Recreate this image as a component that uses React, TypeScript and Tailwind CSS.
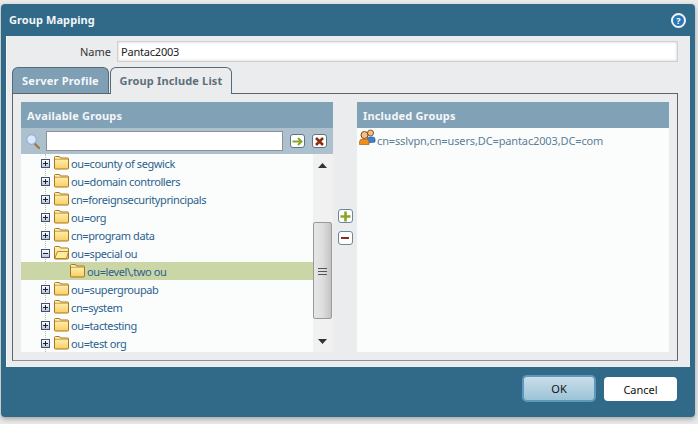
const font = "font-['Noto_Sans',sans-serif]";

const rows = [
  { label: "ou=county of segwick" },
  { label: "ou=domain controllers" },
  { label: "cn=foreignsecurityprincipals" },
  { label: "ou=org" },
  { label: "cn=program data" },
  { label: "ou=special ou", open: true },
  { label: "ou=level\\,two ou", child: true },
  { label: "ou=supergroupab" },
  { label: "cn=system" },
  { label: "ou=tactesting" },
  { label: "ou=test org" },
];

function Folder({ open }: { open?: boolean }) {
  return (
    <svg width="15" height="14" viewBox="0 0 15 14" className="shrink-0">
      <defs>
        <linearGradient id="fold" x1="0" y1="0" x2="0" y2="1">
          <stop offset="0" stopColor="#fff6c4" />
          <stop offset="1" stopColor="#f8cf62" />
        </linearGradient>
      </defs>
      <path d="M0.5 3V1.5Q0.5 0.5 1.5 0.5H5Q6 0.5 6.5 2H13.5Q14.5 2 14.5 3V12Q14.5 13 13.5 13H1.5Q0.5 13 0.5 12Z" fill="url(#fold)" stroke="#a9761a" />
      {open ? <path d="M0.8 12.5L3.5 5.5H14.5L12.5 12.5Z" fill="#fdeb9f" stroke="#a9761a" strokeWidth="0.8" /> : <path d="M1 3.2H14" stroke="#b98a2e" strokeWidth="0.8" />}
    </svg>
  );
}

function Toggle({ open }: { open?: boolean }) {
  return (
    <div className="w-[9px] h-[9px] shrink-0 border border-[#44506a] bg-gradient-to-b from-white to-[#b9c4dc] flex items-center justify-center relative">
      <div className="absolute w-[5px] h-px bg-[#1a2233]" />
      {!open && <div className="absolute w-px h-[5px] bg-[#1a2233]" />}
    </div>
  );
}

function Row({ label, open, child }: { label: string; open?: boolean; child?: boolean }) {
  return (
    <div className={`h-[18px] flex items-center ${child ? "bg-[#cad6a5] pl-[49px]" : "pl-[20px]"}`}>
      {!child && <Toggle open={open} />}
      {!child && <div className="w-[4px]" />}
      <Folder open={open} />
      <span className={`ml-[2px] pt-[2px] text-[11px] tracking-[-0.4px] whitespace-nowrap text-[#2d5f8f] ${font}`}>{label}</span>
    </div>
  );
}

function SmallButton({ children, className = "" }: { children: React.ReactNode; className?: string }) {
  return (
    <div className={`w-[15px] h-[14px] rounded-[3px] border border-[#5c7686] bg-white flex items-center justify-center ${className}`}>
      {children}
    </div>
  );
}

function PanelHeader({ title }: { title: string }) {
  return (
    <div className={`h-[26px] bg-[#81a1b6] flex items-center px-[6px] pt-[2px] text-[11px] font-bold tracking-[0.17px] text-[#f4f7f9] ${font}`}>
      {title}
    </div>
  );
}

function Scrollbar() {
  return (
    <div className="w-[20px] shrink-0 bg-[#f1f1f1] flex flex-col items-start">
      <div className="h-[68px] w-[19px] flex flex-col items-center pt-[9px]">
        <svg width="9" height="5" viewBox="0 0 9 5"><path d="M4.5 0L9 5H0Z" fill="#333" /></svg>
      </div>
      <div className="w-[19px] h-[97px] rounded-[2px] border border-[#9a9a9a] bg-gradient-to-r from-[#e6e6e6] via-[#dedede] to-[#c4c4c4] flex flex-col items-center justify-center gap-[2px] pt-[2px]">
        <div className="w-[9px] h-px bg-[#555]" />
        <div className="w-[9px] h-px bg-[#555]" />
        <div className="w-[9px] h-px bg-[#555]" />
      </div>
      <div className="flex-1 w-[19px] flex flex-col items-center pt-[20px]">
        <svg width="9" height="5" viewBox="0 0 9 5"><path d="M0 0H9L4.5 5Z" fill="#333" /></svg>
      </div>
    </div>
  );
}

export default function App() {
  return (
    <div className="w-[698px] h-[424px] bg-[#e9e9e9] pt-[4px] pl-px overflow-hidden">
      <div className={`w-[694px] h-[413px] bg-[#316a89] rounded-[4px] flex flex-col shadow-[0_2px_5px_rgba(0,0,0,0.3)] ${font}`}>
        <div className="h-[32px] shrink-0 flex items-center justify-between pl-[8px] pr-[9px]">
          <span className="pt-[1px] text-[11px] font-bold tracking-[0.08px] text-[#f2f6f8]">Group Mapping</span>
          <div className="w-[15px] h-[15px] rounded-full border-2 border-[#eef5fa] bg-[#2a77b5] flex items-center justify-center text-[9px] leading-none font-bold text-white">?</div>
        </div>

        <div className="mx-[5px] h-[331px] shrink-0 bg-[#ebecee] pl-[5px] pr-[12px] border-l border-[#f7f7f7] flex flex-col">
          <div className="h-[31px] shrink-0 flex items-center">
            <span className="w-[104px] pr-[5px] pt-[2px] text-right text-[11px] text-[#333]">Name</span>
            <div className="ml-[1px] w-[561px] h-[21px] bg-white border border-[#cfd1cf] shadow-[inset_0_0_3px_rgba(0,0,0,0.2)] flex items-center px-[3px] pt-[1px] text-[11px] tracking-[-0.2px] text-[#222]">Pantac2003</div>
          </div>

          <div className="h-[26px] shrink-0 flex items-end">
            <div className="w-[97px] h-[26px] bg-[#7f9fb4] border border-b-0 border-[#566a78] rounded-t-[6px] flex items-center justify-center pt-[1px] text-[11px] font-bold tracking-[0.2px] text-[#f4f7f9]">Server Profile</div>
            <div className="ml-px w-[122px] h-[27px] -mb-px z-10 bg-[#ebecee] border border-b-0 border-[#566a78] rounded-t-[6px] flex items-center justify-center pt-[1px] text-[11px] font-bold tracking-[0.15px] text-[#5d6f7c]">Group Include List</div>
          </div>

          <div className="w-[666px] h-[268px] shrink-0 border border-[#5f6468] border-b-[#8e9092] pl-[8px] pr-[7px] pt-[8px]">
            <div className="h-[250px] flex">
              <div className="w-[312px] shrink-0 flex flex-col">
                <PanelHeader title="Available Groups" />
                <div className="h-[26px] bg-[#acc0ce] flex items-center pl-[5px]">
                  <svg width="14" height="15" viewBox="0 0 14 15" className="shrink-0">
                    <line x1="8.5" y1="9.5" x2="13" y2="14" stroke="#a8764a" strokeWidth="2.4" strokeLinecap="round" />
                    <circle cx="5.5" cy="5.5" r="4.8" fill="#dbe8f8" stroke="#8eaee0" strokeWidth="1.2" />
                  </svg>
                  <div className="ml-[6px] w-[237px] h-[20px] bg-white border border-[#8d9193]" />
                  <SmallButton className="ml-[7px]">
                    <svg width="11" height="9" viewBox="0 0 11 9"><path d="M0.5 4.5H9M6 1L9.5 4.5L6 8" fill="none" stroke="#89a52a" strokeWidth="2" /></svg>
                  </SmallButton>
                  <SmallButton className="ml-[7px]">
                    <svg width="9" height="9" viewBox="0 0 9 9"><path d="M1 1L8 8M8 1L1 8" stroke="#8c2c12" strokeWidth="2.6" /></svg>
                  </SmallButton>
                </div>
                <div className="h-[198px] bg-[#fbfdfc] flex relative">
                  <div className="absolute left-[24px] top-0 h-[198px] border-l border-dotted border-[#bbbbbb]" />
                  <div className="flex-1 min-w-0 relative overflow-hidden">
                    {rows.map((r) => (
                      <Row key={r.label} {...r} />
                    ))}
                  </div>
                  <Scrollbar />
                </div>
              </div>

              <div className="w-[24px] shrink-0 flex flex-col items-center pt-[107px] gap-[8px]">
                <SmallButton className="border-[#6d8795]">
                  <svg width="11" height="11" viewBox="0 0 11 11"><path d="M5.5 0.5V10.5M0.5 5.5H10.5" stroke="#89a52a" strokeWidth="2.6" /></svg>
                </SmallButton>
                <SmallButton className="border-[#6d8795]">
                  <div className="w-[8px] h-[2px] bg-[#8c2c12]" />
                </SmallButton>
              </div>

              <div className="w-[312px] shrink-0 flex flex-col">
                <PanelHeader title="Included Groups" />
                <div className="flex-1 bg-[#fbfdfc] pl-[2px] pt-[1px] flex items-start">
                  <svg width="17" height="17" viewBox="0 0 17 17" className="shrink-0">
                    <circle cx="11.5" cy="4" r="3" fill="#f3c089" stroke="#8a5620" />
                    <path d="M8 14V10Q8 8 11 8H13Q16 8 16 10V13Z" fill="#3d7fd2" stroke="#2b5c9c" strokeWidth="0.7" />
                    <circle cx="5.5" cy="6" r="3.5" fill="#f3c089" stroke="#7a4a18" />
                    <path d="M0.5 15.5V13Q0.5 10 4 10H7Q10 10 10 13V15.5Z" fill="#ef8e1a" stroke="#a75f10" strokeWidth="0.7" />
                  </svg>
                  <span className="ml-px mt-[5px] text-[11px] leading-[13px] tracking-[-0.13px] whitespace-nowrap text-[#5d7d96]">cn=sslvpn,cn=users,DC=pantac2003,DC=com</span>
                </div>
              </div>
            </div>
          </div>
        </div>

        <div className="flex-1 flex justify-end items-start pt-[9px] pr-[18px] gap-[8px]">
          <div className="w-[74px] h-[27px] -mt-px pt-[2px] rounded-[5px] border-2 border-[#5c9aba] bg-gradient-to-b from-[#c9dee9] to-[#9cc3d8] flex items-center justify-center text-[11px] text-[#111]">OK</div>
          <div className="w-[73px] h-[24px] mt-px pt-[2px] rounded-[4px] bg-white flex items-center justify-center text-[11px] text-[#111]">Cancel</div>
        </div>
      </div>
    </div>
  );
}
